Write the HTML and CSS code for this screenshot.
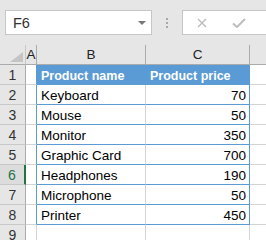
FILE: index.html
```html
<!DOCTYPE html>
<html>
<head>
<meta charset="utf-8">
<link rel="stylesheet" href="styles.css">
</head>
<body>
<div class="app">
  <div class="fbar">
    <div class="namebox">
      <span class="ref">F6</span>
      <svg class="drop" width="8" height="4" viewBox="0 0 8 4"><path d="M0 0H8L4 4Z" fill="#777"/></svg>
    </div>
    <div class="grip">
      <svg width="2" height="10" viewBox="0 0 2 10"><rect x="0" y="0" width="2" height="2" fill="#a8a8a8"/><rect x="0" y="4" width="2" height="2" fill="#a8a8a8"/><rect x="0" y="8" width="2" height="2" fill="#a8a8a8"/></svg>
    </div>
    <div class="formula">
      <svg class="ico-x" width="10" height="10" viewBox="0 0 10 10"><path d="M1 1L9 9M9 1L1 9" stroke="#bdbdbd" stroke-width="1.4" fill="none"/></svg>
      <svg class="ico-ok" width="14" height="10" viewBox="0 0 14 10"><path d="M1 5.5L5 9L13 1" stroke="#bdbdbd" stroke-width="2" fill="none"/></svg>
    </div>
  </div>
  <div class="sheet">
    <div class="corner"><svg width="13" height="10" viewBox="0 0 13 10"><path d="M13 0V10H0Z" fill="#c4c4c4"/></svg></div>
    <div class="colh">A</div>
    <div class="colh">B</div>
    <div class="colh">C</div>
    <div class="colh last"></div>

    <div class="rowh">1</div><div class="cell a tb"></div><div class="cell b th">Product name</div><div class="cell c th">Product price</div><div class="cell d"></div>
    <div class="rowh">2</div><div class="cell a tb"></div><div class="cell b td">Keyboard</div><div class="cell c td num">70</div><div class="cell d"></div>
    <div class="rowh">3</div><div class="cell a tb"></div><div class="cell b td">Mouse</div><div class="cell c td num">50</div><div class="cell d"></div>
    <div class="rowh">4</div><div class="cell a tb"></div><div class="cell b td">Monitor</div><div class="cell c td num">350</div><div class="cell d"></div>
    <div class="rowh">5</div><div class="cell a tb"></div><div class="cell b td">Graphic Card</div><div class="cell c td num">700</div><div class="cell d"></div>
    <div class="rowh sel">6</div><div class="cell a tb"></div><div class="cell b td">Headphones</div><div class="cell c td num">190</div><div class="cell d"></div>
    <div class="rowh">7</div><div class="cell a tb"></div><div class="cell b td">Microphone</div><div class="cell c td num">50</div><div class="cell d"></div>
    <div class="rowh">8</div><div class="cell a tb"></div><div class="cell b td">Printer</div><div class="cell c td num">450</div><div class="cell d"></div>
    <div class="rowh">9</div><div class="cell a"></div><div class="cell b"></div><div class="cell c"></div><div class="cell d"></div>
  </div>
</div>
</body>
</html>
```
FILE: styles.css
```css
* { box-sizing: border-box; }
html, body { margin: 0; padding: 0; }
body {
  width: 266px;
  height: 240px;
  overflow: hidden;
  background: #e6e6e6;
  font-family: "Liberation Sans", Arial, sans-serif;
}
.app { display: flex; flex-direction: column; }

.fbar {
  height: 45px;
  display: flex;
  align-items: flex-start;
  padding: 10px 0 0 5px;
  background: #e6e6e6;
}
.namebox {
  width: 147px;
  height: 25px;
  background: #fff;
  border: 1px solid #c6c6c6;
  display: flex;
  align-items: center;
  justify-content: space-between;
  padding: 0 5px 0 7px;
}
.ref { font-size: 14.5px; color: #333; }
.drop { margin-top: 1px; }
.grip {
  width: 30px;
  height: 25px;
  display: flex;
  align-items: center;
  justify-content: center;
  padding-top: 1px;
}
.formula {
  flex: 1;
  height: 25px;
  background: #fff;
  border: 1px solid #c6c6c6;
  border-right: none;
  display: flex;
  align-items: center;
  padding-left: 14px;
}
.ico-ok { margin-left: 25px; }

.sheet {
  display: grid;
  grid-template-columns: 26px 11px 109px 104px 1fr;
  grid-auto-rows: 20px;
  font-size: 13.5px;
}
.corner {
  background: #e6e6e6;
  border-right: 1px solid #c8c8c8;
  border-bottom: 1px solid #ababab;
  display: flex;
  align-items: flex-end;
  justify-content: flex-end;
  padding: 0 2px 2px 0;
}
.colh {
  background: #e6e6e6;
  border-right: 1px solid #ababab;
  border-bottom: 1px solid #ababab;
  text-align: center;
  line-height: 20px;
  color: #222;
  font-size: 13.5px;
}
.colh.last { border-right: none; }
.rowh {
  background: #e6e6e6;
  border-right: 1px solid #ababab;
  border-bottom: 1px solid #c8c8c8;
  text-align: center;
  line-height: 21px;
  color: #333;
  font-size: 14px;
}
.rowh.sel {
  background: #dcdcdc;
  color: #217346;
  border-right: 2px solid #217346;
}
.cell {
  background: #fff;
  border-right: 1px solid #d4d4d4;
  border-bottom: 1px solid #d4d4d4;
  line-height: 20px;
  padding: 1px 4px 0 4px;
  white-space: nowrap;
  overflow: hidden;
  color: #000;
}
.cell.d { border-right: none; }
.cell.tb { border-right-color: #5b9bd5; }
.th {
  background: #5b9bd5;
  color: #fff;
  font-weight: bold;
  font-size: 12.5px;
  border-bottom-color: #5b9bd5;
}
.cell.b.th { border-right-color: #5b9bd5; }
.cell.c.th, .cell.c.td { border-right-color: #5b9bd5; }
.td { border-bottom-color: #5b9bd5; }
.num { text-align: right; padding-right: 3px; }
```
